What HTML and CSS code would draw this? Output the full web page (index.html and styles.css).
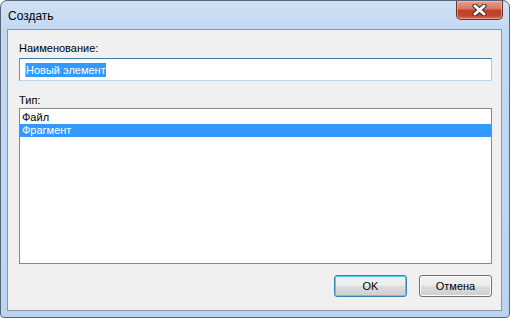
FILE: index.html
```html
<!DOCTYPE html>
<html>
<head>
<meta charset="utf-8">
<title>Создать</title>
<link rel="stylesheet" href="styles.css">
</head>
<body>
<div class="m-win">
	<div class="titlebar">
		<span class="title">Создать</span>
		<span class="close">
			<svg width="19" height="12" viewBox="0 0 19 12">
				<path d="M5 2 L14 10 M14 2 L5 10" stroke="#3a2a2a" stroke-width="5" stroke-linecap="round"/>
				<path d="M5 2 L14 10 M14 2 L5 10" stroke="#fff" stroke-width="3" stroke-linecap="round"/>
			</svg>
		</span>
	</div>
	<div class="client">
		<div class="label">Наименование:</div>
		<div class="textbox"><span class="caret"></span><span class="sel">Новый элемент</span></div>
		<div class="label type">Тип:</div>
		<ul class="list">
			<li>Файл</li>
			<li class="selected">Фрагмент</li>
		</ul>
		<div class="buttons">
			<span class="btn default">OK</span>
			<span class="btn">Отмена</span>
		</div>
	</div>
</div>
</body>
</html>
```
FILE: styles.css
```css
*{margin:0;padding:0;box-sizing:border-box;}
body{background:#fff;font-family:"Liberation Sans",Arial,sans-serif;}

/** окно **/
.m-win{width:510px;height:318px;border:1px solid #55667a;border-radius:7px 7px 4px 4px;padding:0 7px 6px 6px;display:flex;flex-direction:column;
	background:linear-gradient(to bottom,#cfe1f5 0,#c3d9f2 30px,#bcd4ef 100%);}
.titlebar{height:28px;display:flex;align-items:flex-start;}
.title{font-size:12px;color:#000;margin:8px 0 0 1px;line-height:14px;}
.close{margin-left:auto;margin-right:-1px;width:47px;height:19px;display:flex;align-items:center;justify-content:center;
	border:1px solid #6b3228;border-top:none;border-radius:0 0 5px 5px;
	background:linear-gradient(to bottom,#e6a08f 0,#d57660 45%,#c1402a 50%,#c6442c 80%,#d9704f 100%);
	box-shadow:inset 0 0 0 1px rgba(255,220,210,.45);}

/** клиентская область **/
.client{flex:1;border:1px solid #8597ab;background:#f0f0f0;padding:0 9px 0 11px;display:flex;flex-direction:column;font-size:11px;color:#000;}
.label{line-height:13px;margin-top:12px;}
.label.type{margin-top:13px;}
.textbox{height:23px;margin-top:3px;background:#fff;border:1px solid;border-color:#3d7bad #a4c9e3 #b7d9ed #5c93bc;padding:1px 0 0 5px;display:flex;align-items:center;}
.textbox .caret{width:1px;height:14px;background:#f0b060;}
.textbox .sel{background:#3399ff;color:#fff;line-height:14px;}

.list{list-style:none;height:156px;margin-top:1px;background:#fff;border:1px solid #828790;padding-top:2px;}
.list li{height:13px;line-height:13px;padding-left:2px;}
.list li.selected{background:#3399ff;color:#fff;}

/** кнопки **/
.buttons{display:flex;justify-content:flex-end;gap:12px;margin-top:11px;}
.btn{width:73px;height:22px;display:flex;align-items:center;justify-content:center;border:1px solid #707070;border-radius:3px;
	background:linear-gradient(to bottom,#f2f2f2 0,#ebebeb 50%,#dddddd 50%,#cfcfcf 100%);box-shadow:inset 0 0 0 1px #fcfcfc;}
.btn.default{border-color:#3c7fb1;box-shadow:inset 0 0 0 1px #48d2fb;}
```
